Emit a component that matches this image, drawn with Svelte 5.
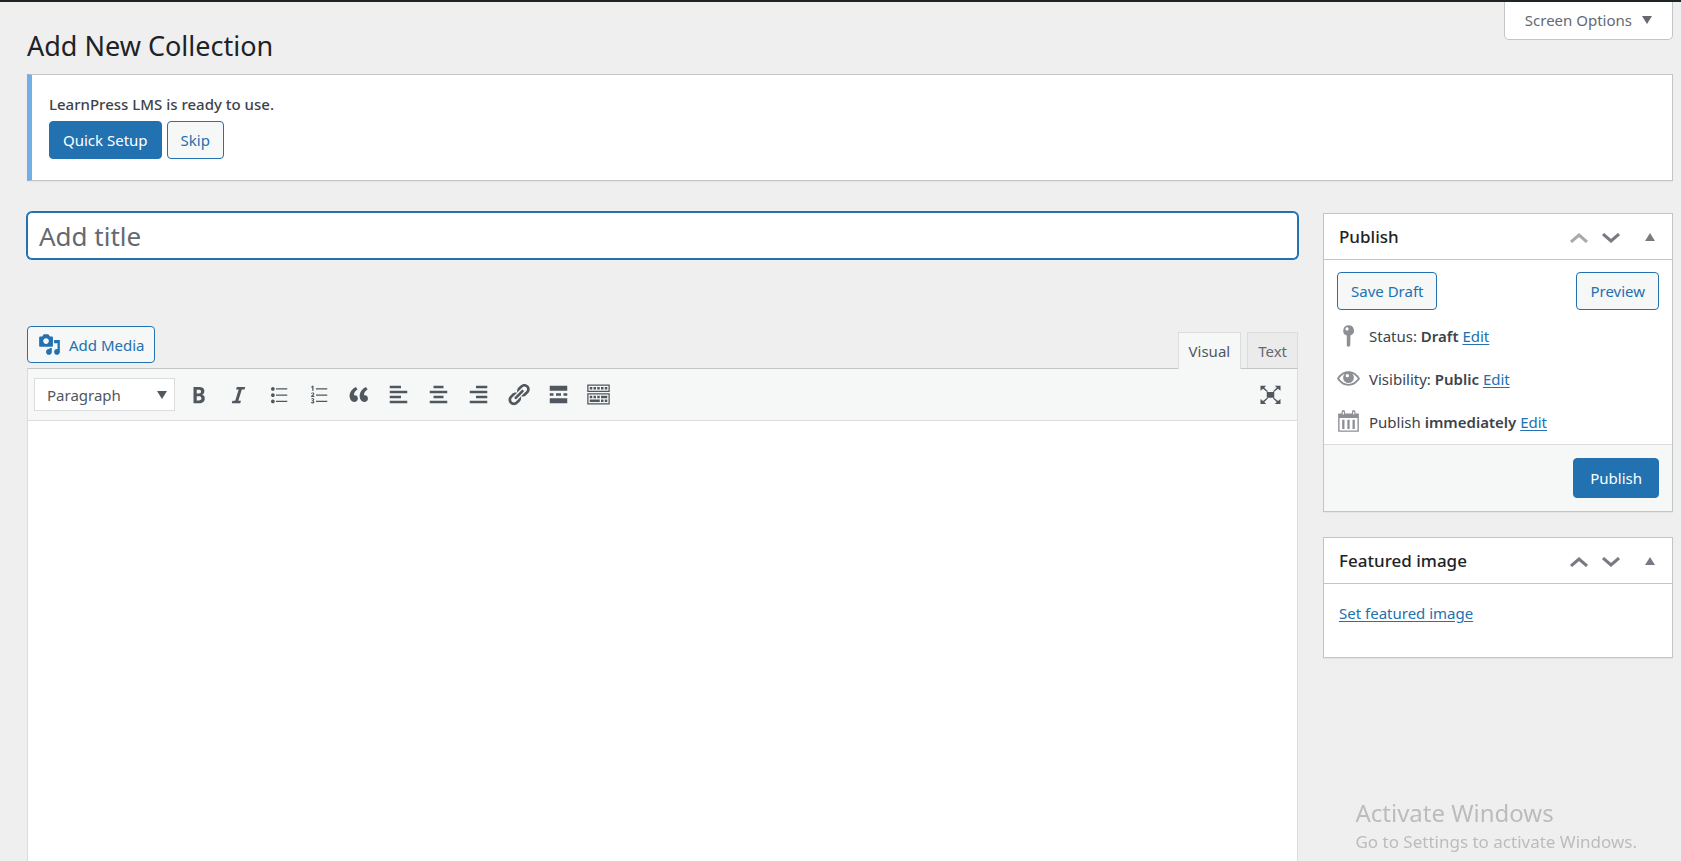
<script>
  let title = $state('')
  let content = $state('')
  let format = $state('Paragraph')
  let tab = $state('Visual')

  const tools = [
    { label: 'Bold', d: 'M6 4v13h4.54c1.37 0 2.46-.33 3.26-1 .8-.66 1.2-1.58 1.2-2.77 0-.84-.17-1.51-.51-2.01s-.9-.85-1.67-1.03v-.09c.57-.1 1.02-.4 1.36-.9s.51-1.13.51-1.91c0-1.14-.39-1.98-1.17-2.5C12.75 4.26 11.5 4 9.78 4H6zm2.57 5.15V6.26h1.36c.73 0 1.27.11 1.61.32.34.22.51.58.51 1.07 0 .54-.16.92-.47 1.15s-.82.35-1.51.35h-1.5zm0 2.19h1.6c1.44 0 2.16.53 2.16 1.61 0 .6-.17 1.05-.51 1.34s-.86.43-1.57.43H8.57v-3.38z' },
    { label: 'Italic', d: 'M14.78 6h-2.13l-2.8 9h2.12l-.62 2H4.6l.62-2h2.14l2.8-9H8.03l.62-2h6.75z' },
    { label: 'Bulleted list', d: 'M5.5 7C4.67 7 4 6.33 4 5.5 4 4.68 4.67 4 5.5 4 6.32 4 7 4.68 7 5.5 7 6.33 6.32 7 5.5 7zM8 5h9v1H8V5zm-2.5 7c-.83 0-1.5-.67-1.5-1.5C4 9.68 4.67 9 5.5 9c.82 0 1.5.68 1.5 1.5 0 .83-.68 1.5-1.5 1.5zM8 10h9v1H8v-1zm-2.5 7c-.83 0-1.5-.67-1.5-1.5 0-.82.67-1.5 1.5-1.5.82 0 1.5.68 1.5 1.5 0 .83-.68 1.5-1.5 1.5zM8 15h9v1H8v-1z' },
    { label: 'Numbered list', d: 'M5 3h1v4H5V4.2l-.8.4V3.7zM8 5h9v1H8zM4 8.9c.8-.9 2.7-.7 2.6.6 0 .7-.6 1.2-1.2 1.7h1.3v.8H4v-.7c1-.9 1.7-1.4 1.7-1.9 0-.6-.8-.4-1.2.1zM8 10h9v1H8zM4.2 13.3c.9-.5 2.4-.4 2.4.7 0 .5-.3.8-.7.9.5.1.8.4.8 1 0 1.2-1.7 1.5-2.7.9v-.8c.7.4 1.8.4 1.8-.2 0-.4-.5-.5-1.1-.5v-.7c.6 0 1-.1 1-.5 0-.5-.8-.4-1.2-.1zM8 15h9v1H8z' },
    { label: 'Blockquote', d: 'M9.49 13.22c0-.74-.2-1.38-.61-1.9-.62-.78-1.83-.88-2.53-.72-.29-1.65 1.11-3.75 2.92-4.65L7.88 4c-2.73 1.3-5.42 4.28-4.96 8.05C3.21 14.43 4.59 16 6.54 16c.85 0 1.56-.25 2.12-.75s.83-1.18.83-2.03zm8.05 0c0-.74-.2-1.38-.61-1.9-.63-.78-1.83-.88-2.53-.72-.29-1.65 1.11-3.75 2.92-4.65L15.93 4c-2.73 1.3-5.41 4.28-4.95 8.05.29 2.38 1.66 3.95 3.61 3.95.85 0 1.56-.25 2.12-.75s.83-1.18.83-2.03z' },
    { label: 'Align left', d: 'M12 5V3H3v2h9zm5 4V7H3v2h14zm-5 4v-2H3v2h9zm5 4v-2H3v2h14z' },
    { label: 'Align center', d: 'M14 5V3H6v2h8zm3 4V7H3v2h14zm-3 4v-2H6v2h8zm3 4v-2H3v2h14z' },
    { label: 'Align right', d: 'M17 5V3H8v2h9zm0 4V7H3v2h14zm0 4v-2H8v2h9zm0 4v-2H3v2h14z' },
    { label: 'Insert link', d: 'M17.74 2.76c1.68 1.69 1.68 4.41 0 6.1l-1.53 1.52c-1.12 1.12-2.7 1.47-4.14 1.09l2.62-2.61.76-.77.76-.76c.84-.84.84-2.2 0-3.04-.84-.85-2.2-.85-3.04 0l-.77.76-3.38 3.38c-.37-1.44-.02-3.02 1.1-4.14l1.52-1.53c1.69-1.68 4.42-1.68 6.1 0zM8.59 13.43l5.34-5.34c.42-.42.42-1.1 0-1.52-.44-.43-1.13-.39-1.53 0l-5.33 5.34c-.42.42-.42 1.1 0 1.52.44.43 1.13.39 1.52 0zm-.76 2.29l4.14-4.15c.38 1.44.03 3.02-1.09 4.14l-1.52 1.53c-1.69 1.68-4.41 1.68-6.1 0-1.68-1.68-1.68-4.42 0-6.1l1.53-1.52c1.12-1.12 2.7-1.47 4.14-1.1l-4.14 4.15c-.85.84-.85 2.2 0 3.05.84.84 2.2.84 3.04 0z' },
    { label: 'Insert Read More tag', d: 'M17 7V3H3v4h14zM6 11V9H3v2h3zm6 0V9H8v2h4zm5 0V9h-3v2h3zm0 6v-4H3v4h14z' },
    { label: 'Toolbar Toggle', d: 'M19 2v6H1V2h18zm-1 5V3H2v4h16zM5 4v2H3V4h2zm3 0v2H6V4h2zm3 0v2H9V4h2zm3 0v2h-2V4h2zm3 0v2h-2V4h2zm2 5v9H1V9h18zm-1 8v-7H2v7h16zM5 11v2H3v-2h2zm3 0v2H6v-2h2zm3 0v2H9v-2h2zm6 0v2h-5v-2h5zm-6 3v2H3v-2h8zm3 0v2h-2v-2h2zm3 0v2h-2v-2h2z' },
  ]

  const fullscreen = 'M7 8h6v4.500H7zM2 3h4.500L5 4.500 8 7.300 7.300 8 4 5.300 2 7zM18 3h-4.500L15 4.500 12 7.300l.7.7L16 5.300 18 7zM2 17.500h4.500L5 16l3-2.800-.7-.7L4 15.200 2 13.500zM18 17.500h-4.500L15 16l-3-2.800.7-.7 3.300 2.700 2-1.700z'
  const media = 'M13 11V4c0-.55-.45-1-1-1h-1.67L9 1H5L3.67 3H2c-.55 0-1 .45-1 1v7c0 .55.45 1 1 1h10c.55 0 1-.45 1-1zM7 4.5c1.38 0 2.5 1.12 2.5 2.5S8.38 9.5 7 9.5 4.5 8.38 4.5 7 5.62 4.5 7 4.5zM14 6h5v10.5c0 1.38-1.12 2.5-2.5 2.5S14 17.88 14 16.5s1.12-2.5 2.5-2.5c.17 0 .34.02.5.05V9h-3V6zm-4 8.05V13h2v3.5c0 1.38-1.12 2.5-2.5 2.5S7 17.88 7 16.5 8.12 14 9.5 14c.17 0 .34.02.5.05z'

  const rows = [
    { label: 'Status:', value: 'Draft', d: 'M10 1a4.7 4.7 0 0 1 1.7 9.1L11.5 19 10 20l-1.5-1V10.1A4.7 4.7 0 0 1 10 1zM8.7 2.9a1.4 1.4 0 1 0 0 2.8 1.4 1.4 0 0 0 0-2.8z' },
    { label: 'Visibility:', value: 'Public', d: 'M10 3.7c4 0 7.6 2.2 10 6.3-2.4 4.1-6 6.3-10 6.3S2.400 14.100 0 10c2.4-4.1 6-6.3 10-6.3zM6.700 5.900C4.800 6.700 3.200 8.100 1.900 10c2 3 4.900 4.700 8.100 4.700s6.100-1.700 8.100-4.700c-1.300-1.900-2.900-3.300-4.800-4.100a4.700 4.700 0 1 1-6.600 0zM9 6a1.500 1.500 0 1 0 0 3 1.500 1.500 0 0 0 0-3z' },
    { label: 'Publish', value: 'immediately', d: 'M1 3h3V1.500a1.500 1.500 0 0 1 3 0V3h6V1.500a1.500 1.500 0 0 1 3 0V3h3v16H1zm1.200 4v10.800h15.600V7zM5 1.500V4h1V1.500zm9 0V4h1V1.500zM4.500 8.500h2v8h-2zm4.500 0h2v8H9zm4.500 0h2v8h-2z' },
  ]
</script>

{#snippet icon(d)}
  <svg class="icon" viewBox="0 0 20 20" aria-hidden="true"><path fill-rule="evenodd" {d} /></svg>
{/snippet}

{#snippet boxHead(name, first)}
  <header class="box-head">
    <h2>{name}</h2>
    <button class="order" aria-label="Move up" disabled={first}>
      <svg viewBox="0 0 18 10"><path d="M1 9l8-7 8 7" /></svg>
    </button>
    <button class="order" aria-label="Move down">
      <svg viewBox="0 0 18 10"><path d="M1 1l8 7 8-7" /></svg>
    </button>
    <button class="toggle" aria-label="Toggle panel">
      <svg viewBox="0 0 10 8"><path d="M0 8l5-8 5 8z" /></svg>
    </button>
  </header>
{/snippet}

<div class="page">
  <div class="top">
    <h1>Add New Collection</h1>
    <button class="screen-options">
      Screen Options
      <svg viewBox="0 0 10 8" aria-hidden="true"><path d="M0 0h10L5 8z" /></svg>
    </button>
  </div>

  <div class="notice">
    <p>LearnPress LMS is ready to use.</p>
    <div class="actions">
      <button class="btn primary">Quick Setup</button>
      <button class="btn">Skip</button>
    </div>
  </div>

  <div class="columns">
    <main>
      <input class="title" type="text" aria-label="Add title" placeholder="Add title" bind:value={title} />

      <div class="editor-top">
        <button class="btn media">{@render icon(media)}Add Media</button>
        <div class="tabs">
          {#each ['Visual', 'Text'] as name}
            <button class:active={tab === name} onclick={() => (tab = name)}>{name}</button>
          {/each}
        </div>
      </div>

      <div class="editor">
        <div class="toolbar">
          <div class="select">
            <select aria-label="Format" bind:value={format}>
              <option>Paragraph</option>
              <option>Heading 1</option>
              <option>Heading 2</option>
              <option>Preformatted</option>
            </select>
            <svg viewBox="0 0 10 8" aria-hidden="true"><path d="M0 0h10L5 8z" /></svg>
          </div>
          <div class="tools">
            {#each tools as tool}
              <button class="tool" aria-label={tool.label}>{@render icon(tool.d)}</button>
            {/each}
          </div>
          <button class="tool" aria-label="Fullscreen">{@render icon(fullscreen)}</button>
        </div>
        <textarea aria-label="Content" bind:value={content}></textarea>
      </div>
    </main>

    <aside>
      <section class="box">
        {@render boxHead('Publish', true)}
        <div class="minor">
          <button class="btn">Save Draft</button>
          <button class="btn">Preview</button>
        </div>
        <ul>
          {#each rows as row}
            <li>
              {@render icon(row.d)}
              <span>{row.label} <b>{row.value}</b> <a href="#edit">Edit</a></span>
            </li>
          {/each}
        </ul>
        <footer>
          <button class="btn primary large">Publish</button>
        </footer>
      </section>

      <section class="box">
        {@render boxHead('Featured image', false)}
        <p class="featured"><a href="#featured">Set featured image</a></p>
      </section>
    </aside>
  </div>
</div>

<div class="watermark">
  <strong>Activate Windows</strong>
  <span>Go to Settings to activate Windows.</span>
</div>

<style>
  :global(body) {
    margin: 0;
    background: #efefef;
  }
  .page,
  .watermark {
    font-family: 'Noto Sans', 'Open Sans', sans-serif;
    font-size: 15px;
    line-height: 24px;
    color: #3c434a;
  }
  .page {
    box-sizing: border-box;
    display: flex;
    flex-direction: column;
    min-height: 100vh;
    padding: 0 8px 0 27px;
    border-top: 2px solid #1d2327;
  }
  .page * {
    box-sizing: border-box;
  }
  button,
  input,
  select,
  textarea {
    font: inherit;
    color: inherit;
  }
  button {
    padding: 0;
    border: 0;
    background: none;
    cursor: pointer;
  }
  a {
    color: #2271b1;
    text-underline-offset: 2px;
  }
  .icon {
    flex: none;
    width: 25px;
    height: 25px;
    fill: currentColor;
  }

  .top {
    display: flex;
    justify-content: space-between;
    align-items: flex-start;
    height: 72px;
  }
  h1 {
    margin: 0;
    padding-top: 26px;
    font-size: 27px;
    font-weight: 400;
    line-height: 36px;
    color: #1d2327;
  }
  .screen-options {
    display: flex;
    align-items: center;
    gap: 10px;
    height: 38px;
    padding: 0 20px 2px;
    border: 1px solid #c3c4c7;
    border-top: 0;
    border-radius: 0 0 5px 5px;
    background: #fff;
    color: #646970;
  }
  .screen-options svg,
  .select svg {
    width: 10px;
    height: 8px;
    fill: currentColor;
  }

  .notice {
    padding: 17px 17px 21px;
    border: 1px solid #c3c4c7;
    border-left: 5px solid #72aee6;
    background: #fff;
    box-shadow: 0 1px 1px rgba(0, 0, 0, 0.04);
  }
  .notice p {
    margin: 0 0 5px;
    font-weight: 500;
  }
  .actions {
    display: flex;
    gap: 5px;
  }
  .btn {
    height: 38px;
    padding: 0 13px;
    border: 1px solid #2271b1;
    border-radius: 4px;
    background: #f6f7f7;
    color: #2271b1;
    white-space: nowrap;
  }
  .btn.primary {
    background: #2271b1;
    color: #fff;
  }
  .btn.large {
    height: 40px;
    padding: 0 16px;
  }

  .columns {
    flex: 1;
    display: flex;
    gap: 25px;
    padding-top: 31px;
  }
  main {
    flex: 1;
    display: flex;
    flex-direction: column;
    min-width: 0;
  }
  .title {
    height: 47px;
    padding: 0 11px;
    border: 1px solid #2271b1;
    border-radius: 5px;
    outline: 0;
    box-shadow: 0 0 0 1px #2271b1;
    background: #fff;
    font-size: 26px;
  }
  .title::placeholder {
    color: #646970;
    opacity: 1;
  }

  .editor-top {
    display: flex;
    justify-content: space-between;
    align-items: flex-end;
    padding-top: 67px;
  }
  .media {
    display: flex;
    align-items: center;
    gap: 8px;
    height: 37px;
    margin-bottom: 5px;
    padding: 0 9px 0 10px;
  }
  .media .icon {
    width: 23px;
    height: 23px;
  }
  .tabs {
    display: flex;
    gap: 6px;
  }
  .tabs button {
    height: 36px;
    padding: 0 10px;
    border: 1px solid #dcdcde;
    border-bottom: 0;
    background: #ebebeb;
    color: #646970;
  }
  .tabs .active {
    position: relative;
    height: 37px;
    margin-bottom: -1px;
    background: #f6f7f7;
    color: #50575e;
  }
  .editor {
    flex: 1;
    display: flex;
    flex-direction: column;
    border: 1px solid #dcdcde;
    border-top-color: #c3c4c7;
    border-bottom: 0;
  }
  .toolbar {
    display: flex;
    align-items: center;
    gap: 7px;
    height: 52px;
    padding: 0 11px 0 6px;
    border-bottom: 1px solid #dcdcde;
    background: #f6f7f7;
    color: #50575e;
  }
  .select {
    display: flex;
    align-items: center;
    width: 141px;
    height: 33px;
    border: 1px solid #dcdcde;
    background: #fff;
  }
  .select select {
    flex: 1;
    min-width: 0;
    padding: 0 0 0 12px;
    border: 0;
    outline: 0;
    appearance: none;
    background: none;
    font-size: 15px;
  }
  .select svg {
    margin-right: 7px;
  }
  .tools {
    flex: 1;
    display: flex;
    gap: 8px;
  }
  .tool {
    display: grid;
    place-items: center;
    width: 32px;
    height: 32px;
  }
  textarea {
    flex: 1;
    width: 100%;
    padding: 12px;
    border: 0;
    outline: 0;
    resize: none;
    background: #fff;
  }

  aside {
    display: flex;
    flex-direction: column;
    gap: 25px;
    width: 350px;
    padding-top: 1px;
  }
  .box {
    border: 1px solid #c3c4c7;
    background: #fff;
    box-shadow: 0 1px 1px rgba(0, 0, 0, 0.04);
  }
  .box-head {
    display: flex;
    align-items: center;
    height: 46px;
    padding: 0 17px 0 15px;
    border-bottom: 1px solid #c3c4c7;
    color: #787c82;
  }
  h2 {
    flex: 1;
    margin: 0;
    font-size: 17px;
    font-weight: 500;
    color: #1d2327;
  }
  .order {
    width: 32px;
    height: 32px;
  }
  .order svg {
    width: 18px;
    height: 10px;
    fill: none;
    stroke: currentColor;
    stroke-width: 3;
  }
  .order:disabled {
    color: #a7aaad;
  }
  .toggle {
    margin-left: 18px;
  }
  .toggle svg {
    display: block;
    width: 10px;
    height: 8px;
    fill: currentColor;
  }
  .minor {
    display: flex;
    justify-content: space-between;
    padding: 12px 13px 0;
  }
  ul {
    margin: 0;
    padding: 4px 13px 1px;
    list-style: none;
  }
  li {
    display: flex;
    align-items: center;
    gap: 9px;
    height: 43px;
  }
  li .icon {
    width: 23px;
    height: 23px;
    color: #8c8f94;
  }
  b {
    font-weight: 600;
  }
  footer {
    display: flex;
    justify-content: flex-end;
    padding: 13px;
    border-top: 1px solid #dcdcde;
    background: #f6f7f7;
  }
  .featured {
    margin: 0;
    padding: 17px 15px 32px;
  }

  .watermark {
    position: fixed;
    right: 44px;
    bottom: 7px;
    display: flex;
    flex-direction: column;
    color: #bcbcbc;
    pointer-events: none;
  }
  .watermark strong {
    font-size: 24px;
    font-weight: 400;
    line-height: 34px;
  }
  .watermark span {
    font-size: 17px;
  }
</style>
